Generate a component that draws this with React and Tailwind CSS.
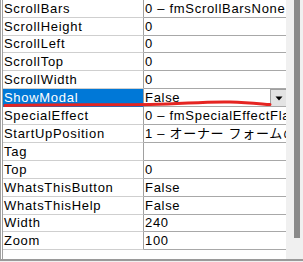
import React from "react";

const rows = [
  { name: "ScrollBars", value: "0 – fmScrollBarsNone", h: "h-[18px]" },
  { name: "ScrollHeight", value: "0", h: "h-[18px]" },
  { name: "ScrollLeft", value: "0", h: "h-[17px]" },
  { name: "ScrollTop", value: "0", h: "h-[18px]" },
  { name: "ScrollWidth", value: "0", h: "h-[18px]" },
  { name: "ShowModal", value: "False", h: "h-[18px]", selected: true },
  { name: "SpecialEffect", value: "0 – fmSpecialEffectFlat", h: "h-[18px]" },
  { name: "StartUpPosition", value: "1 – オーナー フォームの中央", h: "h-[18px]" },
  { name: "Tag", value: "", h: "h-[18px]" },
  { name: "Top", value: "0", h: "h-[18px]" },
  { name: "WhatsThisButton", value: "False", h: "h-[18px]" },
  { name: "WhatsThisHelp", value: "False", h: "h-[18px]" },
  { name: "Width", value: "240", h: "h-[17px]" },
  { name: "Zoom", value: "100", h: "h-[18px]" },
];

const font = {
  fontFamily: '"Liberation Sans", "Noto Sans CJK JP", sans-serif',
};

export default function App() {
  return (
    <div
      className="relative w-[303px] h-[262px] flex flex-col bg-white text-[13px] tracking-[0.7px] text-black overflow-hidden"
      style={font}
    >
      <div className="flex h-[259px]">
        <div className="w-px bg-[#a0a0a0]" />
        <div className="w-px bg-white" />
        <div className="w-[284px] border-l border-[#a0a0a0] flex flex-col">
          {rows.map((r) => (
            <div key={r.name} className={`flex ${r.h} shrink-0`}>
              <div
                className={`w-[141px] border-r border-[#a0a0a0] flex items-center pl-px whitespace-nowrap overflow-hidden ${
                  r.selected
                    ? "bg-[#0078d7] text-white border-b border-b-[#0078d7]"
                    : "border-b border-b-[#cfcfcf]"
                }`}
              >
                {r.name}
              </div>
              <div className="flex-1 min-w-0 flex items-stretch border-b border-b-[#a8a8a8]">
                <div className="flex-1 min-w-0 flex items-center pl-[1px] whitespace-nowrap overflow-hidden">
                  {r.value}
                </div>
                {r.selected && (
                  <div className="w-[16px] bg-[#e3e3e3] border-l border-t border-[#a0a0a0] flex items-center justify-center">
                    <svg width="8" height="5" viewBox="0 0 8 5">
                      <path d="M0.5 0.5 L7.5 0.5 L4 4.5 Z" fill="#000" />
                    </svg>
                  </div>
                )}
              </div>
            </div>
          ))}
        </div>
        <div className="w-[17px] bg-[#f0f0f0] flex">
          <div className="ml-[8px] w-[6px] h-[238px] bg-[#8a8a8a]" />
        </div>
      </div>
      <div className="h-[2px] bg-[#9a9a9a]" />
      <div className="h-px bg-[#f0f0f0]" />
      <svg
        className="absolute left-0 top-0 pointer-events-none"
        width="303"
        height="262"
        viewBox="0 0 303 262"
      >
        <path
          d="M5 105.5 C 40 104.5, 100 105, 150 104.5 C 185 104, 200 101.5, 230 102 C 250 102.5, 262 104, 270 104.5"
          stroke="#e52421"
          strokeWidth="3"
          fill="none"
          strokeLinecap="round"
        />
      </svg>
    </div>
  );
}
